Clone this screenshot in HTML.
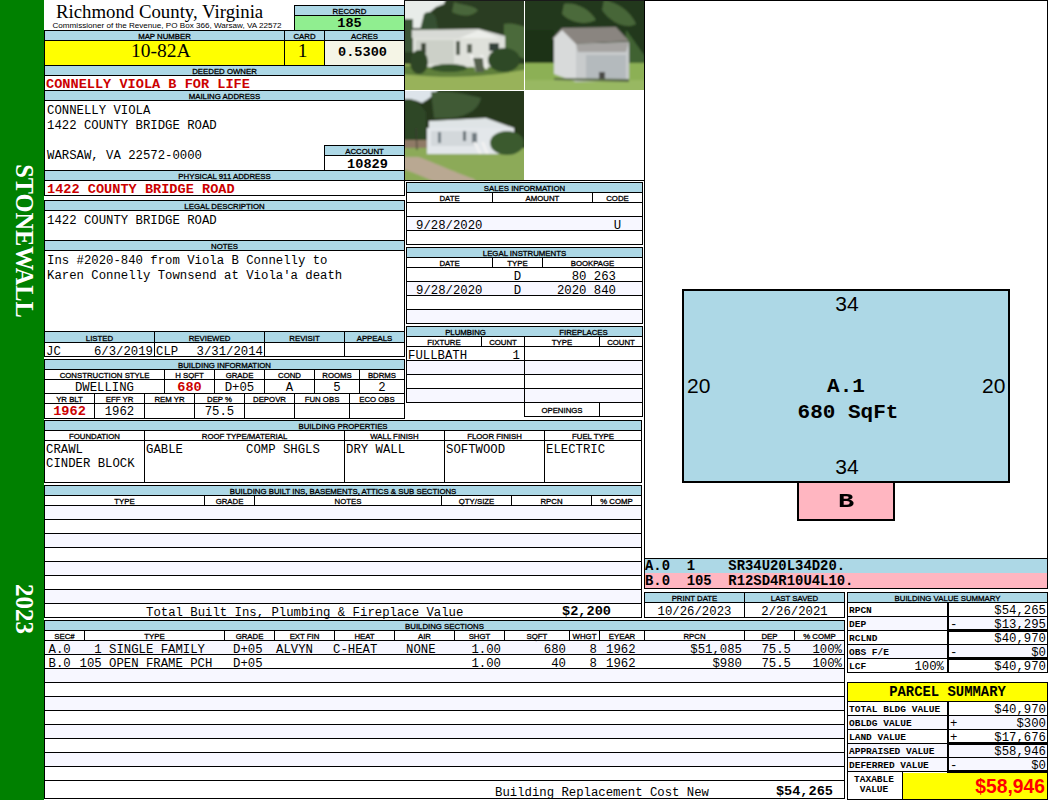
<!DOCTYPE html>
<html><head><meta charset="utf-8"><style>
html,body{margin:0;padding:0;background:#fff;width:1050px;height:800px;overflow:hidden;position:relative}
.r{position:absolute}
.t{position:absolute;height:0;white-space:pre;line-height:0}
.t span{position:absolute;bottom:-0.3em;left:0;line-height:normal;display:block;white-space:pre}
.t.ser span,.t.ss span,.t.big span,.t.sml span,.t.lab span{bottom:-0.215em}
.t.c span{left:0;right:0;text-align:center}
.t.rr span{left:auto;right:0}
.m{font-family:"Liberation Mono",monospace;font-size:12.3px;color:#000}
.mb{font-family:"Liberation Mono",monospace;font-size:13.6px;font-weight:bold;color:#000}
.ser{font-family:"Liberation Serif",serif;font-size:18px;color:#000}
.sml{font-family:"Liberation Sans",sans-serif;font-size:8px;color:#000}
.lab{font-family:"Liberation Sans",sans-serif;font-size:7.8px;letter-spacing:0px;-webkit-text-stroke:0.3px #000;color:#000}
.lb{font-family:"Liberation Mono",monospace;font-size:9.5px;font-weight:bold;color:#000}
.pb{font-family:"Liberation Mono",monospace;font-size:13.9px;font-weight:bold;color:#000}
.ss{font-family:"Liberation Sans",sans-serif;font-size:21px;color:#000}
.big{font-family:"Liberation Sans",sans-serif;font-size:19.3px;font-weight:bold;color:#ff0000}
.vt{position:absolute;font-family:"Liberation Serif",serif;font-size:25px;font-weight:bold;color:#fff;white-space:nowrap;transform:translate(-50%,-50%) rotate(90deg);line-height:1}
</style></head><body>
<div class=r style="left:0px;top:0px;width:44px;height:800px;background:#008000"></div>
<div class="t ser" style="left:56px;top:18.5px;font-size:18.8px;"><span>Richmond County, Virginia</span></div>
<div class="t sml" style="left:52.5px;top:28px;font-size:8.1px;"><span>Commissioner of the Revenue, PO Box 366, Warsaw, VA 22572</span></div>
<div class=r style="left:295px;top:6px;width:109px;height:9px;background:#add8e6"></div>
<div class=r style="left:295px;top:16px;width:109px;height:14px;background:#90ee90"></div>
<div class=r style="left:294px;top:5px;width:111px;height:1px;background:#000"></div>
<div class=r style="left:294px;top:15px;width:111px;height:1px;background:#000"></div>
<div class=r style="left:294px;top:5px;width:1px;height:26px;background:#000"></div>
<div class="t lab c" style="left:295px;width:109px;top:14px;"><span>RECORD</span></div>
<div class="t mb c" style="left:295px;width:109px;top:27px;"><span>185</span></div>
<div class=r style="left:44px;top:30px;width:1px;height:166px;background:#000"></div>
<div class=r style="left:404px;top:0px;width:1px;height:196px;background:#000"></div>
<div class=r style="left:44px;top:30px;width:361px;height:1px;background:#000"></div>
<div class=r style="left:45px;top:31px;width:359px;height:9px;background:#add8e6"></div>
<div class=r style="left:44px;top:40px;width:361px;height:1px;background:#000"></div>
<div class=r style="left:45px;top:41px;width:239px;height:24px;background:#ffff00"></div>
<div class=r style="left:285px;top:41px;width:39px;height:24px;background:#ffff00"></div>
<div class=r style="left:325px;top:41px;width:79px;height:24px;background:#f5f5e6"></div>
<div class=r style="left:284px;top:30px;width:1px;height:36px;background:#000"></div>
<div class=r style="left:324px;top:30px;width:1px;height:36px;background:#000"></div>
<div class="t lab c" style="left:45px;width:239px;top:39px;"><span>MAP NUMBER</span></div>
<div class="t lab c" style="left:285px;width:39px;top:39px;"><span>CARD</span></div>
<div class="t lab c" style="left:325px;width:79px;top:39px;"><span>ACRES</span></div>
<div class="t ser" style="left:131px;top:58px;font-size:19.5px;"><span>10-82A</span></div>
<div class="t ser c" style="left:283px;width:39px;top:58px;font-size:19.5px;"><span>1</span></div>
<div class="t mb c" style="left:323px;width:79px;top:56px;"><span>0.5300</span></div>
<div class=r style="left:44px;top:65px;width:361px;height:1px;background:#000"></div>
<div class=r style="left:45px;top:66px;width:359px;height:9px;background:#add8e6"></div>
<div class="t lab c" style="left:45px;width:359px;top:74px;"><span>DEEDED OWNER</span></div>
<div class=r style="left:44px;top:75px;width:361px;height:1px;background:#000"></div>
<div class="t mb" style="left:46px;top:88px;color:#cc0000;"><span>CONNELLY VIOLA B FOR LIFE</span></div>
<div class=r style="left:44px;top:90px;width:361px;height:1px;background:#000"></div>
<div class=r style="left:45px;top:91px;width:359px;height:9px;background:#add8e6"></div>
<div class="t lab c" style="left:45px;width:359px;top:99px;"><span>MAILING ADDRESS</span></div>
<div class=r style="left:44px;top:100px;width:361px;height:1px;background:#000"></div>
<div class="t m" style="left:47px;top:114px;"><span>CONNELLY VIOLA</span></div>
<div class="t m" style="left:47px;top:129px;"><span>1422 COUNTY BRIDGE ROAD</span></div>
<div class="t m" style="left:47px;top:159px;"><span>WARSAW, VA 22572-0000</span></div>
<div class=r style="left:324px;top:145px;width:81px;height:1px;background:#000"></div>
<div class=r style="left:324px;top:145px;width:1px;height:26px;background:#000"></div>
<div class=r style="left:325px;top:146px;width:79px;height:9px;background:#add8e6"></div>
<div class="t lab c" style="left:325px;width:79px;top:154px;"><span>ACCOUNT</span></div>
<div class=r style="left:324px;top:155px;width:81px;height:1px;background:#000"></div>
<div class="t mb c" style="left:328px;width:79px;top:168px;"><span>10829</span></div>
<div class=r style="left:44px;top:170px;width:361px;height:1px;background:#000"></div>
<div class=r style="left:45px;top:171px;width:359px;height:9px;background:#add8e6"></div>
<div class="t lab c" style="left:45px;width:359px;top:179px;"><span>PHYSICAL 911 ADDRESS</span></div>
<div class=r style="left:44px;top:180px;width:361px;height:1px;background:#000"></div>
<div class="t mb" style="left:47px;top:193px;color:#cc0000;"><span>1422 COUNTY BRIDGE ROAD</span></div>
<div class=r style="left:44px;top:195px;width:361px;height:1px;background:#000"></div>
<div class=r style="left:44px;top:200px;width:361px;height:1px;background:#000"></div>
<div class=r style="left:44px;top:331px;width:361px;height:1px;background:#000"></div>
<div class=r style="left:44px;top:200px;width:1px;height:132px;background:#000"></div>
<div class=r style="left:404px;top:200px;width:1px;height:132px;background:#000"></div>
<div class=r style="left:45px;top:201px;width:359px;height:9px;background:#add8e6"></div>
<div class="t lab c" style="left:45px;width:359px;top:209px;"><span>LEGAL DESCRIPTION</span></div>
<div class=r style="left:44px;top:210px;width:361px;height:1px;background:#000"></div>
<div class="t m" style="left:47px;top:224px;"><span>1422 COUNTY BRIDGE ROAD</span></div>
<div class=r style="left:44px;top:240px;width:361px;height:1px;background:#000"></div>
<div class=r style="left:45px;top:241px;width:359px;height:9px;background:#add8e6"></div>
<div class="t lab c" style="left:45px;width:359px;top:249px;"><span>NOTES</span></div>
<div class=r style="left:44px;top:250px;width:361px;height:1px;background:#000"></div>
<div class="t m" style="left:47px;top:264px;"><span>Ins #2020-840 from Viola B Connelly to</span></div>
<div class="t m" style="left:47px;top:279px;"><span>Karen Connelly Townsend at Viola'a death</span></div>
<div class=r style="left:44px;top:342px;width:361px;height:1px;background:#000"></div>
<div class=r style="left:44px;top:356px;width:361px;height:1px;background:#000"></div>
<div class=r style="left:44px;top:331px;width:1px;height:26px;background:#000"></div>
<div class=r style="left:404px;top:331px;width:1px;height:26px;background:#000"></div>
<div class=r style="left:45px;top:332px;width:359px;height:10px;background:#add8e6"></div>
<div class=r style="left:154px;top:331px;width:1px;height:26px;background:#000"></div>
<div class=r style="left:264px;top:331px;width:1px;height:26px;background:#000"></div>
<div class=r style="left:344px;top:331px;width:1px;height:26px;background:#000"></div>
<div class="t lab c" style="left:45px;width:109px;top:341px;"><span>LISTED</span></div>
<div class="t lab c" style="left:155px;width:109px;top:341px;"><span>REVIEWED</span></div>
<div class="t lab c" style="left:265px;width:79px;top:341px;"><span>REVISIT</span></div>
<div class="t lab c" style="left:345px;width:59px;top:341px;"><span>APPEALS</span></div>
<div class="t m" style="left:46px;top:355px;"><span>JC</span></div>
<div class="t m rr" style="left:-247px;width:400px;top:355px;"><span>6/3/2019</span></div>
<div class="t m" style="left:156px;top:355px;"><span>CLP</span></div>
<div class="t m rr" style="left:-137px;width:400px;top:355px;"><span>3/31/2014</span></div>
<div class=r style="left:44px;top:359px;width:361px;height:1px;background:#000"></div>
<div class=r style="left:44px;top:418px;width:361px;height:1px;background:#000"></div>
<div class=r style="left:44px;top:359px;width:1px;height:60px;background:#000"></div>
<div class=r style="left:404px;top:359px;width:1px;height:60px;background:#000"></div>
<div class=r style="left:45px;top:360px;width:359px;height:9px;background:#add8e6"></div>
<div class="t lab c" style="left:45px;width:359px;top:368px;"><span>BUILDING INFORMATION</span></div>
<div class=r style="left:44px;top:369px;width:361px;height:1px;background:#000"></div>
<div class=r style="left:44px;top:379px;width:361px;height:1px;background:#000"></div>
<div class=r style="left:44px;top:393px;width:361px;height:1px;background:#000"></div>
<div class=r style="left:44px;top:403px;width:361px;height:1px;background:#000"></div>
<div class=r style="left:164px;top:369px;width:1px;height:25px;background:#000"></div>
<div class=r style="left:214px;top:369px;width:1px;height:25px;background:#000"></div>
<div class=r style="left:264px;top:369px;width:1px;height:25px;background:#000"></div>
<div class=r style="left:314px;top:369px;width:1px;height:25px;background:#000"></div>
<div class=r style="left:359px;top:369px;width:1px;height:25px;background:#000"></div>
<div class=r style="left:94px;top:393px;width:1px;height:26px;background:#000"></div>
<div class=r style="left:144px;top:393px;width:1px;height:26px;background:#000"></div>
<div class=r style="left:194px;top:393px;width:1px;height:26px;background:#000"></div>
<div class=r style="left:244px;top:393px;width:1px;height:26px;background:#000"></div>
<div class=r style="left:294px;top:393px;width:1px;height:26px;background:#000"></div>
<div class=r style="left:349px;top:393px;width:1px;height:26px;background:#000"></div>
<div class="t lab c" style="left:45px;width:119px;top:378px;"><span>CONSTRUCTION STYLE</span></div>
<div class="t m c" style="left:45px;width:119px;top:391px;"><span>DWELLING</span></div>
<div class="t lab c" style="left:165px;width:49px;top:378px;"><span>H SQFT</span></div>
<div class="t mb c" style="left:165px;width:49px;top:391px;color:#cc0000;"><span>680</span></div>
<div class="t lab c" style="left:215px;width:49px;top:378px;"><span>GRADE</span></div>
<div class="t m c" style="left:215px;width:49px;top:391px;"><span>D+05</span></div>
<div class="t lab c" style="left:265px;width:49px;top:378px;"><span>COND</span></div>
<div class="t m c" style="left:265px;width:49px;top:391px;"><span>A</span></div>
<div class="t lab c" style="left:315px;width:44px;top:378px;"><span>ROOMS</span></div>
<div class="t m c" style="left:315px;width:44px;top:391px;"><span>5</span></div>
<div class="t lab c" style="left:360px;width:44px;top:378px;"><span>BDRMS</span></div>
<div class="t m c" style="left:360px;width:44px;top:391px;"><span>2</span></div>
<div class="t lab c" style="left:45px;width:49px;top:402px;"><span>YR BLT</span></div>
<div class="t mb c" style="left:45px;width:49px;top:415px;color:#cc0000;"><span>1962</span></div>
<div class="t lab c" style="left:95px;width:49px;top:402px;"><span>EFF YR</span></div>
<div class="t m c" style="left:95px;width:49px;top:415px;"><span>1962</span></div>
<div class="t lab c" style="left:145px;width:49px;top:402px;"><span>REM YR</span></div>
<div class="t m c" style="left:145px;width:49px;top:415px;"><span></span></div>
<div class="t lab c" style="left:195px;width:49px;top:402px;"><span>DEP %</span></div>
<div class="t m c" style="left:195px;width:49px;top:415px;"><span>75.5</span></div>
<div class="t lab c" style="left:245px;width:49px;top:402px;"><span>DEPOVR</span></div>
<div class="t m c" style="left:245px;width:49px;top:415px;"><span></span></div>
<div class="t lab c" style="left:295px;width:54px;top:402px;"><span>FUN OBS</span></div>
<div class="t m c" style="left:295px;width:54px;top:415px;"><span></span></div>
<div class="t lab c" style="left:350px;width:54px;top:402px;"><span>ECO OBS</span></div>
<div class="t m c" style="left:350px;width:54px;top:415px;"><span></span></div>
<svg class=r style="left:404px;top:0px" width="240" height="181" viewBox="0 0 240 181">
<defs>
<filter id="bl" x="-10%" y="-10%" width="120%" height="120%"><feGaussianBlur stdDeviation="0.9"/></filter>
<clipPath id="c1"><rect x="1" y="0" width="119" height="90"/></clipPath>
<clipPath id="c2"><rect x="121" y="0" width="119" height="90"/></clipPath>
<clipPath id="c3"><rect x="1" y="91" width="119" height="89"/></clipPath>
</defs>
<g clip-path="url(#c1)"><g filter="url(#bl)">
<rect x="-5" y="-5" width="131" height="100" fill="#2a3d22"/>
<path d="M-5 -5 H43 L40 4 L32 7 L26 12 L25 28 L-5 28Z" fill="#e8ece9"/>
<path d="M-5 19 L9 19 L9 52 L-5 52Z" fill="#3b5434"/>
<path d="M20 14 C24 10 30 12 32 18 L34 30 H16Z" fill="#365030"/>
<path d="M50 2 C60 6 66 4 74 10 C68 18 56 16 48 12Z" fill="#48663a"/>
<path d="M100 24 C108 22 116 26 126 28 V60 C114 58 106 52 100 46Z" fill="#4c6a3a"/>
<rect x="-5" y="64" width="131" height="31" fill="#98b25a"/>
<path d="M-5 66 L126 64 V69 C90 76 50 78 20 76 L-5 74Z" fill="#5f7f3a"/>
<path d="M8 38 L8 30 L70 29 L75 29 L101 36 L101 39Z" fill="#d8dad6"/>
<path d="M53 39 L75 30 L98 39Z" fill="#eceeea"/>
<rect x="9" y="38" width="92" height="29" fill="#dfe1db"/>
<rect x="12" y="40" width="38" height="24" fill="#ccd0c8"/>
<rect x="17" y="43" width="5" height="10" fill="#3f4a3a"/>
<rect x="52" y="41" width="4" height="14" fill="#4f584a"/>
<rect x="63" y="44" width="5" height="9" fill="#5d6558"/>
<rect x="85" y="43" width="10" height="8" fill="#34423a"/>
<path d="M66 55 L72 72 L75 72 L69 55Z" fill="#f2f2f0"/><path d="M76 55 L81 69 L84 69 L79 55Z" fill="#f0f0ee"/>
<path d="M69 58 L79 58 L80 72 L72 72Z" fill="#55604e"/>
<ellipse cx="15" cy="62" rx="9" ry="12" fill="#2d4526"/>
<ellipse cx="100" cy="60" rx="16" ry="12" fill="#2d4826"/>
<ellipse cx="45" cy="68" rx="18" ry="4" fill="#34522a"/>
</g></g>
<g clip-path="url(#c2)"><g filter="url(#bl)">
<rect x="115" y="-5" width="131" height="100" fill="#24381e"/>
<path d="M160 4 C170 2 185 8 192 20 C180 26 166 22 158 14Z" fill="#4c6a3a"/>
<path d="M200 0 C212 2 226 10 232 24 C222 30 206 22 198 10Z" fill="#476638"/>
<path d="M121 30 H150 V65 H121Z" fill="#1f3019"/>
<path d="M222 30 C230 40 236 50 241 56 V65 H220Z" fill="#3f6232"/>
<rect x="115" y="63" width="131" height="28" fill="#8cb055"/>
<rect x="115" y="80" width="131" height="15" fill="#98b862"/>
<path d="M148 39 L158 28 L212 27 L225 41 L170 44Z" fill="#8a8580"/>
<path d="M150 38 L158 30 L172 44 L172 82 L150 74Z" fill="#d8dada"/>
<path d="M172 44 L225 42 L225 80 L172 82Z" fill="#c8cbcc"/>
<path d="M172 44 L225 42 L222 52 L174 52Z" fill="#a6a4a2"/>
<rect x="182" y="55" width="40" height="25" fill="#b4babd"/>
<rect x="195" y="72" width="6" height="7" fill="#4a4a44"/>
<path d="M150 78 L225 79 L225 82 L150 80Z" fill="#5a6a48"/>
</g></g>
<g clip-path="url(#c3)"><g filter="url(#bl)">
<rect x="-5" y="86" width="131" height="100" fill="#26381f"/>
<path d="M-5 86 H36 C32 94 26 98 18 103 C12 100 6 98 -5 100Z" fill="#dde4ea"/>
<path d="M27 92 C45 90 62 94 77 98 C74 112 58 120 30 118Z" fill="#3f5a36"/>
<path d="M0 100 C8 96 16 104 22 112 L22 140 H0Z" fill="#2f4628"/>
<rect x="-5" y="140" width="28" height="8" fill="#8f7a66"/>
<rect x="-5" y="148" width="131" height="38" fill="#8caa58"/>
<path d="M14 157 C25 160 40 168 70 179 L75 186 L40 186 C25 180 10 172 -5 168 V157Z" fill="#b9a892"/>
<path d="M25 121 L82 118 L110 128 L110 129 L25 129Z" fill="#dfe4e6"/>
<rect x="23" y="128" width="87" height="26" fill="#e3e7ea"/>
<rect x="27" y="131" width="46" height="15" fill="#d3d8db"/>
<rect x="34" y="132" width="3" height="11" fill="#6d7980"/>
<rect x="59" y="131" width="3" height="10" fill="#5e6a70"/>
<rect x="68" y="133" width="5" height="10" fill="#6f7a80"/>
<path d="M69 142 L75 154 L78 154 L72 142Z" fill="#f2f2f2"/><path d="M77 142 L82 154 L85 154 L80 142Z" fill="#f2f2f2"/>
<ellipse cx="103" cy="143" rx="17" ry="12" fill="#3a5a2e"/>
<path d="M12 128 L13 150" stroke="#3a3a30" stroke-width="1"/>
</g></g>
<rect x="0" y="0" width="240" height="1" fill="#1a1a1a"/>
</svg>
<div class=r style="left:404px;top:180px;width:241px;height:1px;background:#000"></div>
<div class=r style="left:406px;top:182px;width:237px;height:1px;background:#000"></div>
<div class=r style="left:406px;top:244px;width:237px;height:1px;background:#000"></div>
<div class=r style="left:406px;top:182px;width:1px;height:63px;background:#000"></div>
<div class=r style="left:642px;top:182px;width:1px;height:63px;background:#000"></div>
<div class=r style="left:407px;top:183px;width:235px;height:9px;background:#add8e6"></div>
<div class="t lab c" style="left:407px;width:235px;top:191px;"><span>SALES INFORMATION</span></div>
<div class=r style="left:406px;top:192px;width:237px;height:1px;background:#000"></div>
<div class=r style="left:406px;top:202px;width:237px;height:1px;background:#000"></div>
<div class=r style="left:406px;top:216px;width:237px;height:1px;background:#000"></div>
<div class=r style="left:406px;top:230px;width:237px;height:1px;background:#000"></div>
<div class=r style="left:407px;top:217px;width:235px;height:13px;background:#f7f7ff"></div>
<div class=r style="left:492px;top:192px;width:1px;height:11px;background:#000"></div>
<div class=r style="left:592px;top:192px;width:1px;height:11px;background:#000"></div>
<div class="t lab c" style="left:407px;width:85px;top:201px;"><span>DATE</span></div>
<div class="t lab c" style="left:493px;width:99px;top:201px;"><span>AMOUNT</span></div>
<div class="t lab c" style="left:593px;width:49px;top:201px;"><span>CODE</span></div>
<div class="t m" style="left:416px;top:229px;"><span>9/28/2020</span></div>
<div class="t m c" style="left:593px;width:49px;top:229px;"><span>U</span></div>
<div class=r style="left:406px;top:247px;width:237px;height:1px;background:#000"></div>
<div class=r style="left:406px;top:323px;width:237px;height:1px;background:#000"></div>
<div class=r style="left:406px;top:247px;width:1px;height:77px;background:#000"></div>
<div class=r style="left:642px;top:247px;width:1px;height:77px;background:#000"></div>
<div class=r style="left:407px;top:248px;width:235px;height:9px;background:#add8e6"></div>
<div class="t lab c" style="left:407px;width:235px;top:256px;"><span>LEGAL INSTRUMENTS</span></div>
<div class=r style="left:406px;top:257px;width:237px;height:1px;background:#000"></div>
<div class=r style="left:406px;top:267px;width:237px;height:1px;background:#000"></div>
<div class=r style="left:406px;top:281px;width:237px;height:1px;background:#000"></div>
<div class=r style="left:406px;top:295px;width:237px;height:1px;background:#000"></div>
<div class=r style="left:406px;top:309px;width:237px;height:1px;background:#000"></div>
<div class=r style="left:407px;top:282px;width:235px;height:13px;background:#f7f7ff"></div>
<div class=r style="left:407px;top:310px;width:235px;height:13px;background:#f7f7ff"></div>
<div class=r style="left:492px;top:257px;width:1px;height:11px;background:#000"></div>
<div class=r style="left:542px;top:257px;width:1px;height:11px;background:#000"></div>
<div class="t lab c" style="left:407px;width:85px;top:266px;"><span>DATE</span></div>
<div class="t lab c" style="left:493px;width:49px;top:266px;"><span>TYPE</span></div>
<div class="t lab c" style="left:543px;width:99px;top:266px;"><span>BOOKPAGE</span></div>
<div class="t m c" style="left:493px;width:49px;top:280px;"><span>D</span></div>
<div class="t m rr" style="left:216px;width:400px;top:280px;"><span>80 263</span></div>
<div class="t m" style="left:416px;top:294px;"><span>9/28/2020</span></div>
<div class="t m c" style="left:493px;width:49px;top:294px;"><span>D</span></div>
<div class="t m rr" style="left:216px;width:400px;top:294px;"><span>2020 840</span></div>
<div class=r style="left:406px;top:326px;width:237px;height:1px;background:#000"></div>
<div class=r style="left:406px;top:326px;width:1px;height:77px;background:#000"></div>
<div class=r style="left:642px;top:326px;width:1px;height:91px;background:#000"></div>
<div class=r style="left:524px;top:326px;width:1px;height:91px;background:#000"></div>
<div class=r style="left:407px;top:327px;width:235px;height:9px;background:#add8e6"></div>
<div class="t lab c" style="left:407px;width:117px;top:335px;"><span>PLUMBING</span></div>
<div class="t lab c" style="left:525px;width:117px;top:335px;"><span>FIREPLACES</span></div>
<div class=r style="left:406px;top:336px;width:237px;height:1px;background:#000"></div>
<div class=r style="left:406px;top:346px;width:237px;height:1px;background:#000"></div>
<div class=r style="left:406px;top:360px;width:237px;height:1px;background:#000"></div>
<div class=r style="left:406px;top:374px;width:237px;height:1px;background:#000"></div>
<div class=r style="left:406px;top:388px;width:237px;height:1px;background:#000"></div>
<div class=r style="left:406px;top:402px;width:237px;height:1px;background:#000"></div>
<div class=r style="left:524px;top:416px;width:119px;height:1px;background:#000"></div>
<div class=r style="left:407px;top:361px;width:117px;height:13px;background:#f7f7ff"></div>
<div class=r style="left:407px;top:389px;width:117px;height:13px;background:#f7f7ff"></div>
<div class=r style="left:525px;top:361px;width:117px;height:13px;background:#f7f7ff"></div>
<div class=r style="left:525px;top:389px;width:117px;height:13px;background:#f7f7ff"></div>
<div class=r style="left:481px;top:336px;width:1px;height:11px;background:#000"></div>
<div class=r style="left:599px;top:336px;width:1px;height:11px;background:#000"></div>
<div class=r style="left:599px;top:402px;width:1px;height:15px;background:#000"></div>
<div class="t lab c" style="left:407px;width:74px;top:345px;"><span>FIXTURE</span></div>
<div class="t lab c" style="left:482px;width:42px;top:345px;"><span>COUNT</span></div>
<div class="t lab c" style="left:525px;width:74px;top:345px;"><span>TYPE</span></div>
<div class="t lab c" style="left:600px;width:42px;top:345px;"><span>COUNT</span></div>
<div class="t m" style="left:408px;top:359px;"><span>FULLBATH</span></div>
<div class="t m rr" style="left:120px;width:400px;top:359px;"><span>1</span></div>
<div class="t lab c" style="left:525px;width:74px;top:413px;"><span>OPENINGS</span></div>
<div class=r style="left:44px;top:420px;width:598px;height:1px;background:#000"></div>
<div class=r style="left:44px;top:482px;width:598px;height:1px;background:#000"></div>
<div class=r style="left:44px;top:420px;width:1px;height:63px;background:#000"></div>
<div class=r style="left:641px;top:420px;width:1px;height:63px;background:#000"></div>
<div class=r style="left:45px;top:421px;width:596px;height:9px;background:#add8e6"></div>
<div class="t lab c" style="left:45px;width:596px;top:429px;"><span>BUILDING PROPERTIES</span></div>
<div class=r style="left:44px;top:430px;width:598px;height:1px;background:#000"></div>
<div class=r style="left:44px;top:440px;width:598px;height:1px;background:#000"></div>
<div class=r style="left:144px;top:430px;width:1px;height:53px;background:#000"></div>
<div class=r style="left:344px;top:430px;width:1px;height:53px;background:#000"></div>
<div class=r style="left:444px;top:430px;width:1px;height:53px;background:#000"></div>
<div class=r style="left:544px;top:430px;width:1px;height:53px;background:#000"></div>
<div class="t lab c" style="left:45px;width:99px;top:439px;"><span>FOUNDATION</span></div>
<div class="t lab c" style="left:145px;width:199px;top:439px;"><span>ROOF TYPE/MATERIAL</span></div>
<div class="t lab c" style="left:345px;width:99px;top:439px;"><span>WALL FINISH</span></div>
<div class="t lab c" style="left:445px;width:99px;top:439px;"><span>FLOOR FINISH</span></div>
<div class="t lab c" style="left:545px;width:96px;top:439px;"><span>FUEL TYPE</span></div>
<div class="t m" style="left:46px;top:453px;"><span>CRAWL</span></div>
<div class="t m" style="left:46px;top:467px;"><span>CINDER BLOCK</span></div>
<div class="t m" style="left:146px;top:453px;"><span>GABLE</span></div>
<div class="t m" style="left:246px;top:453px;"><span>COMP SHGLS</span></div>
<div class="t m" style="left:346px;top:453px;"><span>DRY WALL</span></div>
<div class="t m" style="left:446px;top:453px;"><span>SOFTWOOD</span></div>
<div class="t m" style="left:546px;top:453px;"><span>ELECTRIC</span></div>
<div class=r style="left:44px;top:485px;width:598px;height:1px;background:#000"></div>
<div class=r style="left:44px;top:617px;width:598px;height:1px;background:#000"></div>
<div class=r style="left:44px;top:485px;width:1px;height:133px;background:#000"></div>
<div class=r style="left:641px;top:485px;width:1px;height:133px;background:#000"></div>
<div class=r style="left:45px;top:486px;width:596px;height:9px;background:#add8e6"></div>
<div class="t lab c" style="left:45px;width:596px;top:494px;"><span>BUILDING BUILT INS, BASEMENTS, ATTICS &amp; SUB SECTIONS</span></div>
<div class=r style="left:44px;top:495px;width:598px;height:1px;background:#000"></div>
<div class=r style="left:44px;top:505px;width:598px;height:1px;background:#000"></div>
<div class=r style="left:44px;top:519px;width:598px;height:1px;background:#000"></div>
<div class=r style="left:44px;top:533px;width:598px;height:1px;background:#000"></div>
<div class=r style="left:44px;top:547px;width:598px;height:1px;background:#000"></div>
<div class=r style="left:44px;top:561px;width:598px;height:1px;background:#000"></div>
<div class=r style="left:44px;top:575px;width:598px;height:1px;background:#000"></div>
<div class=r style="left:44px;top:589px;width:598px;height:1px;background:#000"></div>
<div class=r style="left:44px;top:603px;width:598px;height:1px;background:#000"></div>
<div class=r style="left:45px;top:506px;width:596px;height:13px;background:#f7f7ff"></div>
<div class=r style="left:45px;top:534px;width:596px;height:13px;background:#f7f7ff"></div>
<div class=r style="left:45px;top:562px;width:596px;height:13px;background:#f7f7ff"></div>
<div class=r style="left:45px;top:590px;width:596px;height:13px;background:#f7f7ff"></div>
<div class=r style="left:204px;top:495px;width:1px;height:11px;background:#000"></div>
<div class=r style="left:254px;top:495px;width:1px;height:11px;background:#000"></div>
<div class=r style="left:441px;top:495px;width:1px;height:11px;background:#000"></div>
<div class=r style="left:511px;top:495px;width:1px;height:11px;background:#000"></div>
<div class=r style="left:591px;top:495px;width:1px;height:11px;background:#000"></div>
<div class="t lab c" style="left:45px;width:159px;top:504px;"><span>TYPE</span></div>
<div class="t lab c" style="left:205px;width:49px;top:504px;"><span>GRADE</span></div>
<div class="t lab c" style="left:255px;width:186px;top:504px;"><span>NOTES</span></div>
<div class="t lab c" style="left:442px;width:69px;top:504px;"><span>QTY/SIZE</span></div>
<div class="t lab c" style="left:512px;width:79px;top:504px;"><span>RPCN</span></div>
<div class="t lab c" style="left:592px;width:49px;top:504px;"><span>% COMP</span></div>
<div class="t m" style="left:146px;top:616px;"><span>Total Built Ins, Plumbing &amp; Fireplace Value</span></div>
<div class="t mb rr" style="left:211px;width:400px;top:615px;"><span>$2,200</span></div>
<div class=r style="left:44px;top:620px;width:801px;height:1px;background:#000"></div>
<div class=r style="left:44px;top:798px;width:801px;height:1px;background:#000"></div>
<div class=r style="left:44px;top:620px;width:1px;height:179px;background:#000"></div>
<div class=r style="left:844px;top:620px;width:1px;height:179px;background:#000"></div>
<div class=r style="left:45px;top:621px;width:799px;height:9px;background:#add8e6"></div>
<div class="t lab c" style="left:45px;width:799px;top:629px;"><span>BUILDING SECTIONS</span></div>
<div class=r style="left:44px;top:630px;width:801px;height:1px;background:#000"></div>
<div class=r style="left:44px;top:640px;width:801px;height:1px;background:#000"></div>
<div class=r style="left:44px;top:654px;width:801px;height:1px;background:#000"></div>
<div class=r style="left:44px;top:668px;width:801px;height:1px;background:#000"></div>
<div class=r style="left:44px;top:682px;width:801px;height:1px;background:#000"></div>
<div class=r style="left:44px;top:696px;width:801px;height:1px;background:#000"></div>
<div class=r style="left:44px;top:710px;width:801px;height:1px;background:#000"></div>
<div class=r style="left:44px;top:724px;width:801px;height:1px;background:#000"></div>
<div class=r style="left:44px;top:738px;width:801px;height:1px;background:#000"></div>
<div class=r style="left:44px;top:752px;width:801px;height:1px;background:#000"></div>
<div class=r style="left:44px;top:766px;width:801px;height:1px;background:#000"></div>
<div class=r style="left:44px;top:780px;width:801px;height:1px;background:#000"></div>
<div class=r style="left:45px;top:641px;width:799px;height:13px;background:#f7f7ff"></div>
<div class=r style="left:45px;top:669px;width:799px;height:13px;background:#f7f7ff"></div>
<div class=r style="left:45px;top:697px;width:799px;height:13px;background:#f7f7ff"></div>
<div class=r style="left:45px;top:725px;width:799px;height:13px;background:#f7f7ff"></div>
<div class=r style="left:45px;top:753px;width:799px;height:13px;background:#f7f7ff"></div>
<div class="t lab c" style="left:45px;width:39px;top:639px;"><span>SEC#</span></div>
<div class=r style="left:84px;top:630px;width:1px;height:11px;background:#000"></div>
<div class="t lab c" style="left:85px;width:139px;top:639px;"><span>TYPE</span></div>
<div class=r style="left:224px;top:630px;width:1px;height:11px;background:#000"></div>
<div class="t lab c" style="left:225px;width:49px;top:639px;"><span>GRADE</span></div>
<div class=r style="left:274px;top:630px;width:1px;height:11px;background:#000"></div>
<div class="t lab c" style="left:275px;width:59px;top:639px;"><span>EXT FIN</span></div>
<div class=r style="left:334px;top:630px;width:1px;height:11px;background:#000"></div>
<div class="t lab c" style="left:335px;width:59px;top:639px;"><span>HEAT</span></div>
<div class=r style="left:394px;top:630px;width:1px;height:11px;background:#000"></div>
<div class="t lab c" style="left:395px;width:59px;top:639px;"><span>AIR</span></div>
<div class=r style="left:454px;top:630px;width:1px;height:11px;background:#000"></div>
<div class="t lab c" style="left:455px;width:49px;top:639px;"><span>SHGT</span></div>
<div class=r style="left:504px;top:630px;width:1px;height:11px;background:#000"></div>
<div class="t lab c" style="left:505px;width:64px;top:639px;"><span>SQFT</span></div>
<div class=r style="left:569px;top:630px;width:1px;height:11px;background:#000"></div>
<div class="t lab c" style="left:570px;width:29px;top:639px;"><span>WHGT</span></div>
<div class=r style="left:599px;top:630px;width:1px;height:11px;background:#000"></div>
<div class="t lab c" style="left:600px;width:44px;top:639px;"><span>EYEAR</span></div>
<div class=r style="left:644px;top:630px;width:1px;height:11px;background:#000"></div>
<div class="t lab c" style="left:645px;width:99px;top:639px;"><span>RPCN</span></div>
<div class=r style="left:744px;top:630px;width:1px;height:11px;background:#000"></div>
<div class="t lab c" style="left:745px;width:49px;top:639px;"><span>DEP</span></div>
<div class=r style="left:794px;top:630px;width:1px;height:11px;background:#000"></div>
<div class="t lab c" style="left:795px;width:49px;top:639px;"><span>% COMP</span></div>
<div class="t m" style="left:48.5px;top:653px;"><span>A.0</span></div>
<div class="t m" style="left:79.5px;top:653px;"><span>  1 SINGLE FAMILY</span></div>
<div class="t m" style="left:233px;top:653px;"><span>D+05</span></div>
<div class="t m" style="left:276px;top:653px;"><span>ALVYN</span></div>
<div class="t m" style="left:333px;top:653px;"><span>C-HEAT</span></div>
<div class="t m" style="left:406px;top:653px;"><span>NONE</span></div>
<div class="t m rr" style="left:101px;width:400px;top:653px;"><span>1.00</span></div>
<div class="t m rr" style="left:166px;width:400px;top:653px;"><span>680</span></div>
<div class="t m rr" style="left:197px;width:400px;top:653px;"><span>8</span></div>
<div class="t m" style="left:606px;top:653px;"><span>1962</span></div>
<div class="t m rr" style="left:342px;width:400px;top:653px;"><span>$51,085</span></div>
<div class="t m rr" style="left:391px;width:400px;top:653px;"><span>75.5</span></div>
<div class="t m rr" style="left:442px;width:400px;top:653px;"><span>100%</span></div>
<div class="t m" style="left:48.5px;top:667px;"><span>B.0</span></div>
<div class="t m" style="left:79.5px;top:667px;"><span>105 OPEN FRAME PCH</span></div>
<div class="t m" style="left:233px;top:667px;"><span>D+05</span></div>
<div class="t m" style="left:276px;top:667px;"><span></span></div>
<div class="t m" style="left:333px;top:667px;"><span></span></div>
<div class="t m" style="left:406px;top:667px;"><span></span></div>
<div class="t m rr" style="left:101px;width:400px;top:667px;"><span>1.00</span></div>
<div class="t m rr" style="left:166px;width:400px;top:667px;"><span>40</span></div>
<div class="t m rr" style="left:197px;width:400px;top:667px;"><span>8</span></div>
<div class="t m" style="left:606px;top:667px;"><span>1962</span></div>
<div class="t m rr" style="left:342px;width:400px;top:667px;"><span>$980</span></div>
<div class="t m rr" style="left:391px;width:400px;top:667px;"><span>75.5</span></div>
<div class="t m rr" style="left:442px;width:400px;top:667px;"><span>100%</span></div>
<div class="t m" style="left:495px;top:796px;"><span>Building Replacement Cost New</span></div>
<div class="t mb rr" style="left:433px;width:400px;top:795px;"><span>$54,265</span></div>
<div class=r style="left:644px;top:592px;width:201px;height:1px;background:#000"></div>
<div class=r style="left:644px;top:617px;width:201px;height:1px;background:#000"></div>
<div class=r style="left:644px;top:592px;width:1px;height:26px;background:#000"></div>
<div class=r style="left:844px;top:592px;width:1px;height:26px;background:#000"></div>
<div class=r style="left:645px;top:593px;width:199px;height:9px;background:#add8e6"></div>
<div class=r style="left:644px;top:602px;width:201px;height:1px;background:#000"></div>
<div class=r style="left:744px;top:592px;width:1px;height:26px;background:#000"></div>
<div class="t lab c" style="left:645px;width:99px;top:601px;"><span>PRINT DATE</span></div>
<div class="t lab c" style="left:745px;width:99px;top:601px;"><span>LAST SAVED</span></div>
<div class="t m c" style="left:645px;width:99px;top:615px;"><span>10/26/2023</span></div>
<div class="t m c" style="left:745px;width:99px;top:615px;"><span>2/26/2021</span></div>
<div class=r style="left:644px;top:0px;width:404px;height:1px;background:#000"></div>
<div class=r style="left:644px;top:588px;width:404px;height:1px;background:#000"></div>
<div class=r style="left:644px;top:0px;width:1px;height:589px;background:#000"></div>
<div class=r style="left:1047px;top:0px;width:1px;height:589px;background:#000"></div>
<div class=r style="left:644px;top:558px;width:404px;height:1px;background:#000"></div>
<div class=r style="left:645px;top:559px;width:402px;height:14px;background:#add8e6"></div>
<div class=r style="left:645px;top:573px;width:402px;height:15px;background:#ffb6c1"></div>
<div class="t mb" style="left:645px;top:570px;font-size:13.9px;"><span>A.0  1    SR34U20L34D20.</span></div>
<div class="t mb" style="left:645px;top:585px;font-size:13.9px;"><span>B.0  105  R12SD4R10U4L10.</span></div>
<div class=r style="left:684px;top:291px;width:324px;height:190px;background:#add8e6"></div>
<div class=r style="left:682px;top:289px;width:328px;height:2px;background:#000"></div>
<div class=r style="left:682px;top:481px;width:328px;height:2px;background:#000"></div>
<div class=r style="left:682px;top:289px;width:2px;height:194px;background:#000"></div>
<div class=r style="left:1008px;top:289px;width:2px;height:194px;background:#000"></div>
<div class=r style="left:799px;top:483px;width:94px;height:36px;background:#ffb6c1"></div>
<div class=r style="left:797px;top:481px;width:2px;height:40px;background:#000"></div>
<div class=r style="left:893px;top:481px;width:2px;height:40px;background:#000"></div>
<div class=r style="left:797px;top:519px;width:98px;height:2px;background:#000"></div>
<div class="t ss c" style="left:830px;width:34px;top:311px;"><span>34</span></div>
<div class="t ss c" style="left:830px;width:34px;top:474px;"><span>34</span></div>
<div class="t ss" style="left:687px;top:393px;"><span>20</span></div>
<div class="t ss" style="left:982px;top:393px;"><span>20</span></div>
<div class="t mb c" style="left:796px;width:100px;top:392px;font-size:21px;"><span>A.1</span></div>
<div class="t mb c" style="left:768px;width:160px;top:418px;font-size:21px;"><span>680 SqFt</span></div>
<div class="t mb c" style="left:796px;width:100px;top:507px;font-size:20px;display:inline-block;transform:scaleX(1.35);transform-origin:50% 100%;"><span>B</span></div>
<div class=r style="left:847px;top:592px;width:201px;height:1px;background:#000"></div>
<div class=r style="left:847px;top:672px;width:201px;height:1px;background:#000"></div>
<div class=r style="left:847px;top:592px;width:1px;height:81px;background:#000"></div>
<div class=r style="left:1047px;top:592px;width:1px;height:81px;background:#000"></div>
<div class=r style="left:848px;top:593px;width:199px;height:9px;background:#add8e6"></div>
<div class="t lab c" style="left:848px;width:199px;top:601px;"><span>BUILDING VALUE SUMMARY</span></div>
<div class=r style="left:847px;top:602px;width:201px;height:1px;background:#000"></div>
<div class=r style="left:847px;top:616px;width:201px;height:1px;background:#000"></div>
<div class=r style="left:847px;top:644px;width:201px;height:1px;background:#000"></div>
<div class=r style="left:847px;top:630px;width:101px;height:1px;background:#000"></div>
<div class=r style="left:847px;top:658px;width:101px;height:1px;background:#000"></div>
<div class=r style="left:947px;top:629px;width:101px;height:3px;background:#000"></div>
<div class=r style="left:947px;top:657px;width:101px;height:3px;background:#000"></div>
<div class=r style="left:848px;top:617px;width:99px;height:13px;background:#f7f7ff"></div>
<div class=r style="left:949px;top:617px;width:98px;height:12px;background:#f7f7ff"></div>
<div class=r style="left:848px;top:645px;width:99px;height:13px;background:#f7f7ff"></div>
<div class=r style="left:949px;top:645px;width:98px;height:12px;background:#f7f7ff"></div>
<div class=r style="left:947px;top:602px;width:2px;height:71px;background:#000"></div>
<div class="t lb" style="left:849px;top:613px;"><span>RPCN</span></div>
<div class="t m rr" style="left:646px;width:400px;top:614px;"><span>$54,265</span></div>
<div class="t lb" style="left:849px;top:627px;"><span>DEP</span></div>
<div class="t m" style="left:950px;top:628px;"><span>-</span></div>
<div class="t m rr" style="left:646px;width:400px;top:628px;"><span>$13,295</span></div>
<div class="t lb" style="left:849px;top:641px;"><span>RCLND</span></div>
<div class="t m rr" style="left:646px;width:400px;top:642px;"><span>$40,970</span></div>
<div class="t lb" style="left:849px;top:655px;"><span>OBS F/E</span></div>
<div class="t m" style="left:950px;top:656px;"><span>-</span></div>
<div class="t m rr" style="left:646px;width:400px;top:656px;"><span>$0</span></div>
<div class="t lb" style="left:849px;top:669px;"><span>LCF</span></div>
<div class="t m rr" style="left:646px;width:400px;top:670px;"><span>$40,970</span></div>
<div class="t m rr" style="left:544px;width:400px;top:670px;"><span>100%</span></div>
<div class=r style="left:847px;top:682px;width:201px;height:1px;background:#000"></div>
<div class=r style="left:847px;top:799px;width:201px;height:1px;background:#000"></div>
<div class=r style="left:847px;top:682px;width:1px;height:118px;background:#000"></div>
<div class=r style="left:1047px;top:682px;width:1px;height:118px;background:#000"></div>
<div class=r style="left:848px;top:683px;width:199px;height:18px;background:#ffff00"></div>
<div class=r style="left:847px;top:701px;width:201px;height:1px;background:#000"></div>
<div class="t pb c" style="left:848px;width:199px;top:696px;"><span>PARCEL SUMMARY</span></div>
<div class=r style="left:847px;top:715px;width:201px;height:1px;background:#000"></div>
<div class=r style="left:847px;top:729px;width:201px;height:1px;background:#000"></div>
<div class=r style="left:847px;top:757px;width:201px;height:1px;background:#000"></div>
<div class=r style="left:847px;top:743px;width:101px;height:1px;background:#000"></div>
<div class=r style="left:947px;top:742px;width:101px;height:3px;background:#000"></div>
<div class=r style="left:847px;top:771px;width:101px;height:1px;background:#000"></div>
<div class=r style="left:947px;top:770px;width:101px;height:3px;background:#000"></div>
<div class=r style="left:947px;top:701px;width:2px;height:70px;background:#000"></div>
<div class=r style="left:848px;top:716px;width:99px;height:13px;background:#f7f7ff"></div>
<div class=r style="left:949px;top:716px;width:98px;height:13px;background:#f7f7ff"></div>
<div class=r style="left:848px;top:744px;width:99px;height:13px;background:#f7f7ff"></div>
<div class=r style="left:949px;top:745px;width:98px;height:12px;background:#f7f7ff"></div>
<div class=r style="left:848px;top:758px;width:99px;height:13px;background:#f7f7ff"></div>
<div class=r style="left:949px;top:758px;width:98px;height:12px;background:#f7f7ff"></div>
<div class="t lb" style="left:849px;top:712px;"><span>TOTAL BLDG VALUE</span></div>
<div class="t m rr" style="left:646px;width:400px;top:713px;"><span>$40,970</span></div>
<div class="t lb" style="left:849px;top:726px;"><span>OBLDG VALUE</span></div>
<div class="t m" style="left:950px;top:727px;"><span>+</span></div>
<div class="t m rr" style="left:646px;width:400px;top:727px;"><span>$300</span></div>
<div class="t lb" style="left:849px;top:740px;"><span>LAND VALUE</span></div>
<div class="t m" style="left:950px;top:741px;"><span>+</span></div>
<div class="t m rr" style="left:646px;width:400px;top:741px;"><span>$17,676</span></div>
<div class="t lb" style="left:849px;top:754px;"><span>APPRAISED VALUE</span></div>
<div class="t m rr" style="left:646px;width:400px;top:755px;"><span>$58,946</span></div>
<div class="t lb" style="left:849px;top:768px;"><span>DEFERRED VALUE</span></div>
<div class="t m" style="left:950px;top:769px;"><span>-</span></div>
<div class="t m rr" style="left:646px;width:400px;top:769px;"><span>$0</span></div>
<div class=r style="left:902px;top:773px;width:145px;height:26px;background:#ffff00"></div>
<div class=r style="left:902px;top:772px;width:1px;height:28px;background:#000"></div>
<div class="t lb c" style="left:847px;width:54px;top:782px;"><span>TAXABLE</span></div>
<div class="t lb c" style="left:847px;width:54px;top:792px;"><span>VALUE</span></div>
<div class="t big rr" style="left:645px;width:400px;top:794px;"><span>$58,946</span></div>
<div class="vt" style="left:24px;top:241px;font-size:24.3px">STONEWALL</div>
<div class="vt" style="left:24px;top:609px;">2023</div>
</body></html>
